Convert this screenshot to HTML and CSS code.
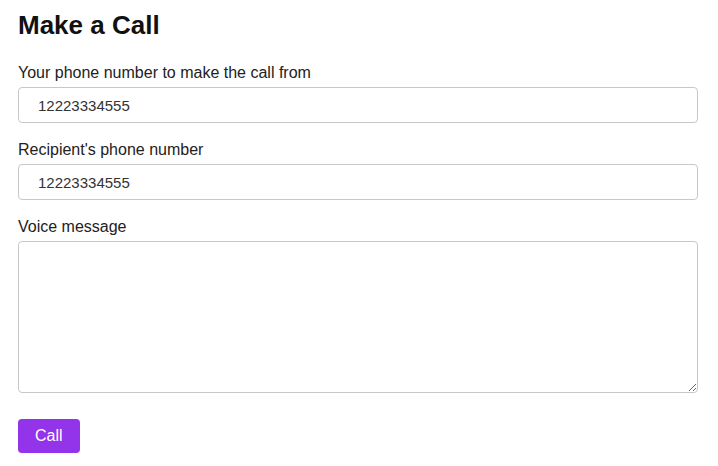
FILE: index.html
```html
<!DOCTYPE html>
<html lang="en">
<head>
<meta charset="utf-8">
<title>Make a Call</title>
<link rel="stylesheet" href="styles.css">
</head>
<body>
<main class="page">
  <h1 class="title">Make a Call</h1>
  <form class="form">
    <div class="field">
      <label class="label" for="from">Your phone number to make the call from</label>
      <input class="input" id="from" type="text" value="12223334555">
    </div>
    <div class="field">
      <label class="label" for="to">Recipient's phone number</label>
      <input class="input" id="to" type="text" value="12223334555">
    </div>
    <div class="field">
      <label class="label" for="msg">Voice message</label>
      <textarea class="textarea" id="msg"></textarea>
    </div>
    <div class="actions">
      <button class="button" type="button">Call</button>
    </div>
  </form>
</main>
</body>
</html>
```
FILE: styles.css
```css
* { box-sizing: border-box; }
html, body { margin: 0; background: #fff; }
body {
  font-family: "Liberation Sans", Arial, sans-serif;
  color: #222;
}
.page {
  padding: 10px 20px 0 18px;
}
.title {
  margin: 0;
  font-size: 26px;
  line-height: 30px;
  font-weight: 700;
  color: #111;
}
.form {
  margin-top: 23px;
  display: flex;
  flex-direction: column;
  gap: 17px;
}
.field {
  display: flex;
  flex-direction: column;
  gap: 4px;
}
.label {
  font-size: 16px;
  line-height: 20px;
  color: #222;
}
.input, .textarea {
  width: 100%;
  border: 1px solid #c8c8c8;
  border-radius: 4px;
  font-family: "Liberation Sans", Arial, sans-serif;
  font-size: 15px;
  color: #333;
  background: #fff;
  outline: none;
}
.input {
  height: 36px;
  padding: 0 19px;
}
.textarea {
  height: 152px;
  padding: 8px 19px;
  resize: vertical;
  display: block;
}
.actions {
  margin-top: 9px;
}
.button {
  height: 34px;
  padding: 0 17px;
  border: none;
  border-radius: 4px;
  background: #9333ea;
  color: #fff;
  font-family: "Liberation Sans", Arial, sans-serif;
  font-size: 16px;
  cursor: pointer;
}
```
